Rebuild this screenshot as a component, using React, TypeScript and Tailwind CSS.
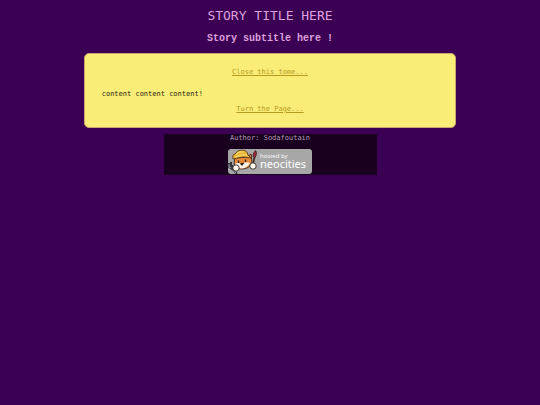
import React from 'react';

const HostBadge: React.FC = () => {
  return (
    <a
      href="#host"
      className="relative flex h-[25px] w-[84px] overflow-hidden rounded-[3px] bg-[#a7a7a7] pl-8 text-white"
    >
      <svg viewBox="0 0 32 25" className="absolute left-0 top-0 h-[25px] w-8" fill="none" aria-hidden="true">
        {/* fork */}
        <path d="M1 14v4l3 2 1-4M3 13v5M4 19l5 6" stroke="#33323a" strokeWidth="2" />
        <path d="M1 15v3l2 1M5 20l3 4" stroke="#b9c3cb" strokeWidth="0.8" />
        {/* brush */}
        <path d="M26.500 8L25 15" stroke="#49302d" strokeWidth="1.8" />
        <path d="M27.500 1.500c1.500 2 1 4.500-.5 7l-2-1c0-2.500 1-4.500 2.500-6z" fill="#a52a38" stroke="#351b24" strokeWidth="0.8" />
        {/* head */}
        <path d="M7 9l-1 5q1 6 8 6 8 0 10-7l-1-8-4 3z" fill="#e88a3b" stroke="#493020" strokeWidth="1" />
        <path d="M7 15q3-2 6 0 5-3 9-1-3 5-8 5.500-5 0-7-4.500z" fill="#fff5e8" />
        <path d="M10.500 11.500v2.500M17.500 10.500v2.500M13 15l2-.5-1 1.500z" stroke="#342723" strokeWidth="1.400" />
        {/* helmet */}
        <path d="M5 10q-1-5 2-5 2-4 7-4 5 0 6 5l3 3q-8-2-13 0z" fill="#e9b539" stroke="#59401d" strokeWidth="0.9" />
        <path d="M8 5q3-3 7-2M7 8q5-3 12-2" stroke="#ffe27b" strokeWidth="1" />
        {/* paws */}
        <circle cx="8" cy="19" r="3.200" fill="#fff6ed" stroke="#342b2b" strokeWidth="0.9" />
        <circle cx="25" cy="17" r="3.200" fill="#fff6ed" stroke="#342b2b" strokeWidth="0.9" />
      </svg>
      <span className="flex flex-col pt-1 text-left font-['Open_Sans',sans-serif]">
        <span className="text-[6px] leading-[7px]">hosted by</span>
        <span className="font-['Noto_Sans',sans-serif] text-[11px] leading-[8px]">neocities</span>
      </span>
    </a>
  );
};

const App: React.FC = () => {
  return (
    <div className="min-h-screen bg-[#3b0053] pt-2 font-['DejaVu_Sans_Mono',monospace] text-[7px] leading-2">
      <header className="text-center text-[#dda0dd]">
        <h1 className="text-[13px] leading-4">STORY TITLE HERE</h1>
        <h2 className="mt-2 font-['Liberation_Mono',monospace] text-[10px] font-bold leading-[14px]">Story subtitle here !</h2>
      </header>

      <main className="mx-auto mt-[7px] w-[69%] rounded-[5px] border border-[#c8a56b] bg-[#f9ed78] px-4 pb-3.5 pt-3.5">
        <nav className="flex justify-center">
          <a href="#close" className="text-[#b59b20] underline">Close this tome...</a>
        </nav>
        <p className="mt-3.5 pl-px text-[#28230c]">content content content!</p>
        <nav className="mt-[7px] flex justify-center">
          <a href="#next" className="text-[#b59b20] underline">Turn the Page...</a>
        </nav>
      </main>

      <footer className="mx-auto mt-1.5 flex w-full max-w-[213px] flex-col items-center gap-[7px] bg-[#19001f] pb-px text-[#b59ab7]">
        <p>Author: Sodafoutain</p>
        <HostBadge />
      </footer>
    </div>
  );
};

export default App;
